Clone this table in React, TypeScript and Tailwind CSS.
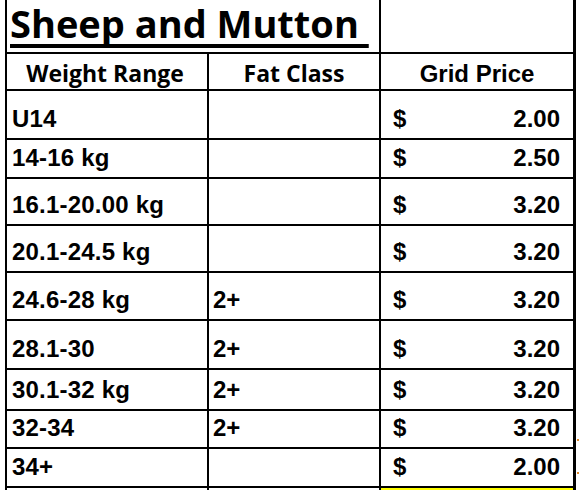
import React from "react";

interface PriceRow {
  weight: string;
  fat: string;
  price: string;
  height: string;
  flag?: string;
}

const rows: PriceRow[] = [
  { weight: "U14", fat: "", price: "2.00", height: "h-[49px]" },
  { weight: "14-16 kg", fat: "", price: "2.50", height: "h-[39px]" },
  { weight: "16.1-20.00 kg", fat: "", price: "3.20", height: "h-[47px]" },
  { weight: "20.1-24.5 kg", fat: "", price: "3.20", height: "h-[47px]" },
  { weight: "24.6-28 kg", fat: "2+", price: "3.20", height: "h-[48px]" },
  { weight: "28.1-30", fat: "2+", price: "3.20", height: "h-[49px]" },
  { weight: "30.1-32 kg", fat: "2+", price: "3.20", height: "h-[41px]" },
  { weight: "32-34", fat: "2+", price: "3.20", height: "h-[38px]", flag: "top-[28px]" },
  { weight: "34+", fat: "", price: "2.00", height: "h-[39px]", flag: "top-[23px]" },
];

const cellFont = "font-['Liberation_Sans',Arial,sans-serif] font-bold text-[24px] leading-none";
const headFont = "font-['Open_Sans',sans-serif] font-bold text-[23px] leading-none";

export default function App() {
  return (
    <div className="w-[580px] h-[490px] overflow-hidden bg-white text-black">
      <div className="ml-[5px] w-[571px] border-l-2 border-r-[3px] border-black">
        {/* Title */}
        <div className="grid grid-cols-[374px_192px] h-[54px] border-b-2 border-black">
          <div className="border-r-2 border-black pl-[3px]">
            <div className="font-['Open_Sans',sans-serif] font-bold text-[38px] leading-[46px] whitespace-pre underline decoration-[4px] underline-offset-[6px] decoration-black [text-decoration-skip-ink:none]">
              {"Sheep and Mutton "}
            </div>
          </div>
          <div />
        </div>

        {/* Header */}
        <div className="grid grid-cols-[202px_172px_192px] h-[37px] border-b-2 border-black">
          <div className={`flex items-end justify-center pb-[4px] pr-[4px] border-r-2 border-black ${headFont}`}>
            Weight Range
          </div>
          <div className={`flex items-end justify-center pb-[4px] border-r-2 border-black ${headFont}`}>
            Fat Class
          </div>
          <div className={`flex items-end justify-center pb-[3px] ${cellFont} text-[23px]`}>
            Grid Price
          </div>
        </div>

        {/* Rows */}
        {rows.map((row) => (
          <div
            key={row.weight}
            className={`relative grid grid-cols-[202px_172px_192px] border-b-2 border-black ${row.height}`}
          >
            <div className={`flex items-end pb-[7px] pl-[5px] tracking-[0.2px] border-r-2 border-black ${cellFont}`}>
              {row.weight}
            </div>
            <div className={`flex items-end pb-[7px] pl-[4px] border-r-2 border-black ${cellFont}`}>
              {row.fat}
            </div>
            <div className={`flex items-end justify-between pb-[7px] pl-[12px] pr-[13px] ${cellFont}`}>
              <span>$</span>
              <span>{row.price}</span>
            </div>
            {row.flag && (
              <span className={`absolute -right-[6px] w-[2px] h-[2px] bg-[#e08a2c] ${row.flag}`} />
            )}
          </div>
        ))}

        {/* trailing row */}
        <div className="grid grid-cols-[202px_172px_192px] h-[12px]">
          <div className="border-r-2 border-black" />
          <div className="border-r-2 border-black" />
          <div className="bg-[#ffff00]" />
        </div>
      </div>
    </div>
  );
}
